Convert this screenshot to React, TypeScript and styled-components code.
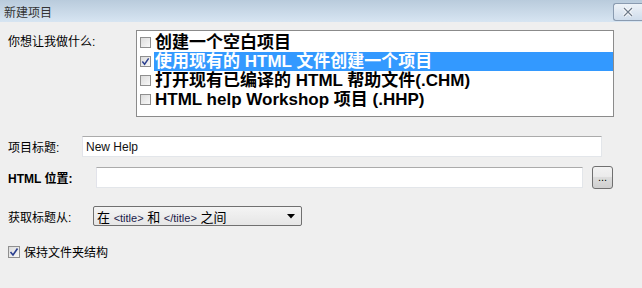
import styled, { createGlobalStyle } from "styled-components";

const GlobalStyle = createGlobalStyle`
  html, body {
    margin: 0;
    padding: 0;
    background: #efefef;
  }
  body {
    font-family: "Liberation Sans", "Noto Sans CJK SC", sans-serif;
    font-size: 12px;
    color: #000;
  }
`;

const Window = styled.div`
  width: 642px;
  height: 288px;
  background: #efefef;
  overflow: hidden;
`;

const TitleBar = styled.div`
  height: 22px;
  display: flex;
  align-items: center;
  justify-content: space-between;
  padding: 0 0 0 4px;
  background: linear-gradient(#b9cbdc, #d7e5f2);
`;

const TitleText = styled.span`
  font-size: 12px;
  color: #333;
`;

const CloseButton = styled.div`
  width: 28px;
  height: 16px;
  margin-top: 1px;
  border: 1px solid #8a9bb0;
  border-right: none;
  border-radius: 3px 0 0 3px;
  background: linear-gradient(#eef3f8, #cfdceb);
  display: flex;
  align-items: center;
  justify-content: center;
`;

const Body = styled.div`
  padding: 8px 8px 0 8px;
  display: flex;
  flex-direction: column;
`;

const Row = styled.div<{ $mt?: number }>`
  display: flex;
  align-items: center;
  margin-top: ${(p) => p.$mt ?? 0}px;
`;

const TopRow = styled.div`
  display: flex;
  align-items: flex-start;
`;

const Label = styled.div<{ $w: number; $bold?: boolean }>`
  width: ${(p) => p.$w}px;
  flex-shrink: 0;
  font-weight: ${(p) => (p.$bold ? 700 : 400)};
`;

const ListBox = styled.div`
  width: 478px;
  height: 87px;
  background: #fff;
  border: 1px solid #8b8b8b;
  padding-top: 2px;
  box-sizing: border-box;
  margin-left: 8px;
`;

const ListItem = styled.div`
  height: 19px;
  display: flex;
  align-items: center;
  padding-left: 3px;
`;

const ItemText = styled.div<{ $selected?: boolean }>`
  flex: 1;
  height: 19px;
  line-height: 19px;
  margin-left: 3px;
  padding-left: 1px;
  font-size: 17px;
  font-weight: 700;
  white-space: nowrap;
  background: ${(p) => (p.$selected ? "#3399ff" : "transparent")};
  color: ${(p) => (p.$selected ? "#fff" : "#000")};
`;

const Box = styled.div<{ $size: number }>`
  width: ${(p) => p.$size}px;
  height: ${(p) => p.$size}px;
  box-sizing: border-box;
  border: 1px solid #8f8f8f;
  background: linear-gradient(135deg, #dcdcdc, #f8f8f8);
  display: flex;
  align-items: center;
  justify-content: center;
  flex-shrink: 0;
`;

const TextInput = styled.div<{ $w: number }>`
  width: ${(p) => p.$w}px;
  height: 21px;
  box-sizing: border-box;
  background: #fff;
  border: 1px solid #e3e6ea;
  border-top-color: #ababab;
  border-left-color: #e2e3ea;
  padding-left: 3px;
  display: flex;
  align-items: center;
  font-size: 12px;
  color: #111;
`;

const BrowseButton = styled.div`
  width: 21px;
  height: 23px;
  box-sizing: border-box;
  margin-left: 9px;
  border: 1px solid #707070;
  border-radius: 3px;
  background: linear-gradient(#f2f2f2 0%, #ebebeb 45%, #dddddd 50%, #cfcfcf 100%);
  display: flex;
  align-items: center;
  justify-content: center;
  font-size: 11px;
  padding-bottom: 2px;
`;

const Select = styled.div`
  width: 209px;
  height: 20px;
  box-sizing: border-box;
  border: 1px solid #707070;
  border-radius: 2px;
  background: linear-gradient(#f4f4f4, #e6e6e6);
  display: flex;
  align-items: center;
  padding: 0 6px 0 3px;
  justify-content: space-between;
  font-size: 13px;
`;

const Tag = styled.span`
  font-size: 11px;
  color: #1a1a4a;
`;

const CheckLine = styled.div`
  display: flex;
  align-items: center;
  gap: 4px;
  margin-top: 17px;
`;

const Check = ({ checked, size }: { checked?: boolean; size: number }) => (
  <Box $size={size}>
    {checked && (
      <svg width={size - 2} height={size - 2} viewBox="0 0 10 10">
        <path d="M1.5 5 L4 8 L8.5 1.5" fill="none" stroke="#2a3f8f" strokeWidth="1.6" />
      </svg>
    )}
  </Box>
);

const items = [
  "创建一个空白项目",
  "使用现有的 HTML 文件创建一个项目",
  "打开现有已编译的 HTML 帮助文件(.CHM)",
  "HTML help Workshop 项目 (.HHP)",
];

export default function App() {
  return (
    <Window>
      <GlobalStyle />
      <TitleBar>
        <TitleText>新建项目</TitleText>
        <CloseButton>
          <svg width="12" height="10" viewBox="0 0 12 10">
            <path d="M2 1 L10 9 M10 1 L2 9" stroke="#fff" strokeWidth="3" />
            <path d="M2 1 L10 9 M10 1 L2 9" stroke="#6d7a8a" strokeWidth="1.2" />
          </svg>
        </CloseButton>
      </TitleBar>
      <Body>
        <TopRow>
          <Label $w={120} style={{ marginTop: 2 }}>你想让我做什么:</Label>
          <ListBox>
            {items.map((t, i) => (
              <ListItem key={t}>
                <Check size={11} checked={i === 1} />
                <ItemText $selected={i === 1}>{t}</ItemText>
              </ListItem>
            ))}
          </ListBox>
        </TopRow>
        <Row $mt={19}>
          <Label $w={74}>项目标题:</Label>
          <TextInput $w={520}>New Help</TextInput>
        </Row>
        <Row $mt={9}>
          <Label $w={88} $bold>HTML 位置:</Label>
          <TextInput $w={487} />
          <BrowseButton>...</BrowseButton>
        </Row>
        <Row $mt={17}>
          <Label $w={85}>获取标题从:</Label>
          <Select>
            <span>
              在 <Tag>&lt;title&gt;</Tag> 和 <Tag>&lt;/title&gt;</Tag> 之间
            </span>
            <svg width="8" height="5" viewBox="0 0 8 5">
              <path d="M0 0 L8 0 L4 4.5 Z" fill="#000" />
            </svg>
          </Select>
        </Row>
        <CheckLine>
          <Check size={12} checked />
          <span>保持文件夹结构</span>
        </CheckLine>
      </Body>
    </Window>
  );
}
